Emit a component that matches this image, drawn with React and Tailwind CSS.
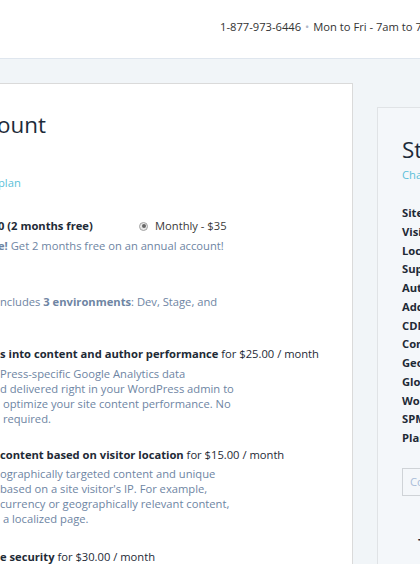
import React from "react";

export default function App() {
  const desc = "text-[11.2px] leading-[15px] text-[#6e85a3] whitespace-nowrap";
  const listItems = ["Sites", "Visits", "Locations", "Support", "Automated backups", "Add-ons", "CDN", "Content", "Geotargeting", "Global edge", "WordPress", "SPM", "Plan"];
  return (
    <div className="w-[420px] h-[564px] overflow-hidden bg-[#f1f5f8] font-['Open_Sans',sans-serif] text-[#1e2a36]">
      <header className="h-[59px] bg-white border-b border-[#dfe6ee] pl-[220px] pt-[19px]">
        <div className="text-[11.2px] leading-[16px] whitespace-nowrap text-[#333]">
          1-877-973-6446 <span className="text-[#b0b8c8] px-[1px]">•</span> Mon to Fri - 7am to 7pm
        </div>
      </header>
      <div className="flex items-start">
        <section className="w-[353px] shrink-0 mt-[24px] bg-white border-t border-r border-[#dadada] h-[520px] overflow-hidden">
          <div className="mt-[26px] -ml-[3px] h-[30px] text-[22.4px] leading-[30px] text-[#1d2b3a] whitespace-nowrap">ount</div>
          <div className="mt-[34px] -ml-[2px] h-[18px] text-[11.2px] leading-[18px] text-[#5bbfd9]">plan</div>
          <div className="mt-[25px] h-[18px] flex items-center text-[11.2px] leading-[18px] whitespace-nowrap">
            <span className="font-bold -ml-[2px] w-[141px]">0 (2 months free)</span>
            <span className="w-[9px] h-[9px] rounded-full border border-[#a3a3a3] bg-[#e8e8e8] flex items-center justify-center">
              <span className="w-[4px] h-[4px] rounded-full bg-[#666]" />
            </span>
            <span className="ml-[7px] text-[#3a3a3a]">Monthly - $35</span>
          </div>
          <div className="mt-[2px] h-[18px] text-[11.2px] leading-[18px] text-[#6e85a3] whitespace-nowrap -ml-[2px]">
            <span className="font-bold">e!</span> Get 2 months free on an annual account!
          </div>
          <div className="mt-[38px] h-[18px] text-[11.2px] leading-[18px] text-[#6e85a3] whitespace-nowrap">
            ncludes <span className="font-bold">3 environments</span>: Dev, Stage, and
          </div>
          <div className="mt-[34px] h-[18px] text-[11.2px] leading-[18px] whitespace-nowrap">
            <span className="font-bold">s into content and author performance</span> for $25.00 / month
          </div>
          <div className="mt-[3px]">
            <div className={desc}>Press-specific Google Analytics data</div>
            <div className={desc}>d delivered right in your WordPress admin to</div>
            <div className={desc}>&nbsp;optimize your site content performance. No</div>
            <div className={desc}>&nbsp;required.</div>
          </div>
          <div className="mt-[20px] h-[18px] text-[11.2px] leading-[18px] whitespace-nowrap">
            <span className="font-bold">content based on visitor location</span> for $15.00 / month
          </div>
          <div className="mt-[2px]">
            <div className={desc}>ographically targeted content and unique</div>
            <div className={desc}>based on a site visitor's IP. For example,</div>
            <div className={desc}>currency or geographically relevant content,</div>
            <div className={desc}>&nbsp;a localized page.</div>
          </div>
          <div className="mt-[22px] h-[18px] text-[11.2px] leading-[18px] whitespace-nowrap">
            <span className="font-bold">e security</span> for $30.00 / month
          </div>
        </section>
        <aside className="ml-[24px] mt-[48px] w-[200px] shrink-0 h-[520px] bg-[#f4f7fa] border-t border-l border-[#e0e3e6] pl-[24px] overflow-hidden">
          <div className="mt-[28px] h-[28px] text-[22.4px] leading-[28px] text-[#1d2b3a] whitespace-nowrap">Standard</div>
          <div className="mt-[3px] h-[16px] text-[11.2px] leading-[16px] text-[#5bbfd9] whitespace-nowrap">Change plan</div>
          <div className="mt-[21px]">
            {listItems.map((t) => (
              <div key={t} className="h-[18.75px] text-[11.2px] leading-[18.75px] font-bold text-[#1e2a36] whitespace-nowrap">{t}</div>
            ))}
          </div>
          <div className="mt-[20px] h-[28px] w-[160px] border border-[#cfd3d7] bg-[#f4f7fa] text-[11.2px] leading-[26px] pl-[7px] text-[#a8bcd8]">Continue</div>
          <div className="mt-[38px] pl-[16px] text-[13px] leading-[18px] font-bold text-[#1e2a36] whitespace-nowrap">Total</div>
        </aside>
      </div>
    </div>
  );
}
